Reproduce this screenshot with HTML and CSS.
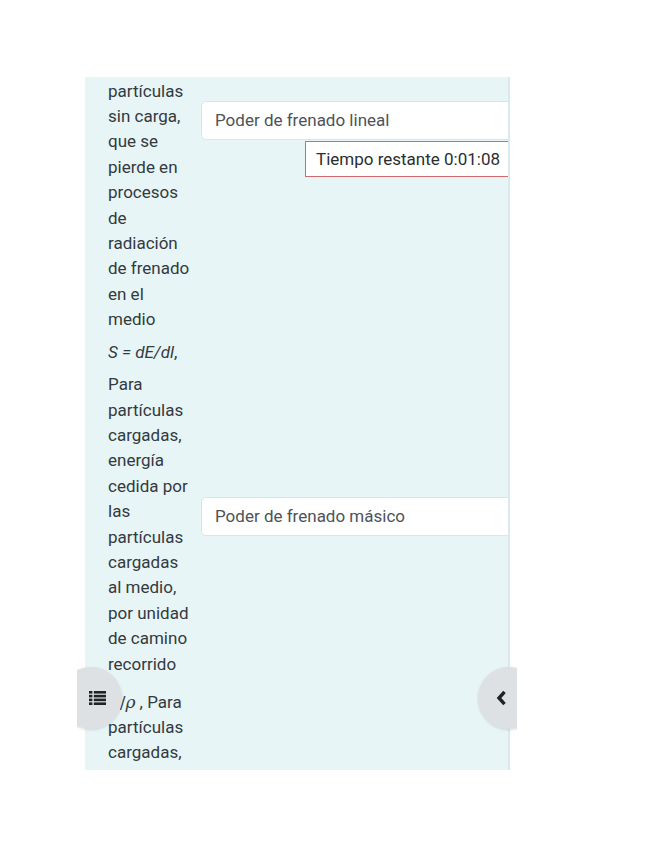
FILE: index.html
```html
<!DOCTYPE html>
<html lang="es">
<head>
<meta charset="utf-8">
<title>Pregunta de emparejamiento</title>
<link rel="stylesheet" href="styles.css">
</head>
<body>
<div class="phone">
  <div class="topbar"></div>
  <main class="region">
    <table class="answer">
      <tr class="row-first">
        <td class="text">partículas sin carga, que se pierde en procesos de radiación de frenado en el medio</td>
        <td class="control"><div class="select">Poder de frenado lineal</div></td>
      </tr>
      <tr>
        <td class="text"><em class="formula">S = dE/dl</em>, Para partículas cargadas, energía cedida por las partículas cargadas al medio, por unidad de camino recorrido</td>
        <td class="control"><div class="select">Poder de frenado másico</div></td>
      </tr>
      <tr>
        <td class="text"><span class="math"><i>S</i>/<i>ρ</i></span> , Para partículas cargadas,</td>
        <td class="control"></td>
      </tr>
    </table>
    <div class="timer">Tiempo restante 0:01:08</div>
  </main>
  <button class="fab fab-left" aria-label="Navegación">
    <svg width="17" height="14" viewBox="0 0 17 14">
      <rect x="0" y="0" width="3.4" height="2.6"/><rect x="4.8" y="0" width="12.2" height="2.6"/>
      <rect x="0" y="3.8" width="3.4" height="2.6"/><rect x="4.8" y="3.8" width="12.2" height="2.6"/>
      <rect x="0" y="7.6" width="3.4" height="2.6"/><rect x="4.8" y="7.6" width="12.2" height="2.6"/>
      <rect x="0" y="11.4" width="3.4" height="2.6"/><rect x="4.8" y="11.4" width="12.2" height="2.6"/>
    </svg>
  </button>
  <button class="fab fab-right" aria-label="Bloques">
    <svg width="11" height="16" viewBox="0 0 11 16">
      <path d="M8.5 1.8 L3 8 L8.5 14.2" fill="none" stroke="#1f2326" stroke-width="3.4" stroke-linejoin="miter" stroke-linecap="butt"/>
    </svg>
  </button>
</div>
</body>
</html>
```
FILE: styles.css
```css
html, body {
  margin: 0;
  padding: 0;
  background: #ffffff;
}
body {
  font-family: Roboto, "Noto Sans", Arial, sans-serif;
  font-size: 17px;
  line-height: 25.4px;
  color: #343a3e;
}
.phone {
  position: relative;
  margin-left: 77px;
  width: 440px;
  height: 848px;
  overflow: hidden;
}
.topbar {
  height: 77px;
}
.region {
  position: relative;
  box-sizing: border-box;
  margin-left: 8px;
  width: 425px;
  height: 693px;
  padding: 1.5px 0 0 23px;
  background: #e7f5f7;
  border-right: 2px solid #d9eaec;
  overflow: hidden;
}
.answer {
  border-collapse: collapse;
  border-spacing: 0;
  table-layout: fixed;
  width: 520px;
}
.answer td {
  padding: 3.8px 0;
  vertical-align: middle;
}
.answer td.text {
  width: 86px;
  padding-right: 7px;
}
.answer td.control {
  padding-top: 19.8px;
}
.answer .row-first td {
  padding-top: 0;
}
.answer .row-first td.control {
  vertical-align: top;
  padding-top: 22px;
}
.formula {
  display: inline-block;
  vertical-align: top;
  padding-bottom: 6.6px;
}
.math {
  display: inline-block;
  padding-top: 5px;
  font-family: "DejaVu Serif", "Liberation Serif", serif;
}
.select {
  box-sizing: border-box;
  height: 39px;
  width: 330px;
  padding: 0 13px;
  background: #ffffff;
  border: 1px solid #dfe3e6;
  border-radius: 5px;
  color: #4d5358;
  line-height: 37px;
}
.timer {
  position: absolute;
  top: 64px;
  left: 220px;
  box-sizing: border-box;
  width: 208px;
  height: 36px;
  padding: 0 10px;
  background: #ffffff;
  border: 1px solid #d16a6e;
  line-height: 34px;
  color: #2a2e31;
  white-space: nowrap;
}
.fab {
  position: absolute;
  top: 667px;
  width: 62px;
  height: 62px;
  border: 0;
  padding: 0;
  border-radius: 50%;
  background: #dee1e4;
  box-shadow: 0 1px 3px rgba(0,0,0,0.12);
  display: flex;
  align-items: center;
  justify-content: center;
}
.fab svg {
  fill: #1f2326;
}
.fab-left {
  left: -17px;
  padding-left: 12px;
}
.fab-right {
  left: 401px;
  padding-right: 16px;
}
```
